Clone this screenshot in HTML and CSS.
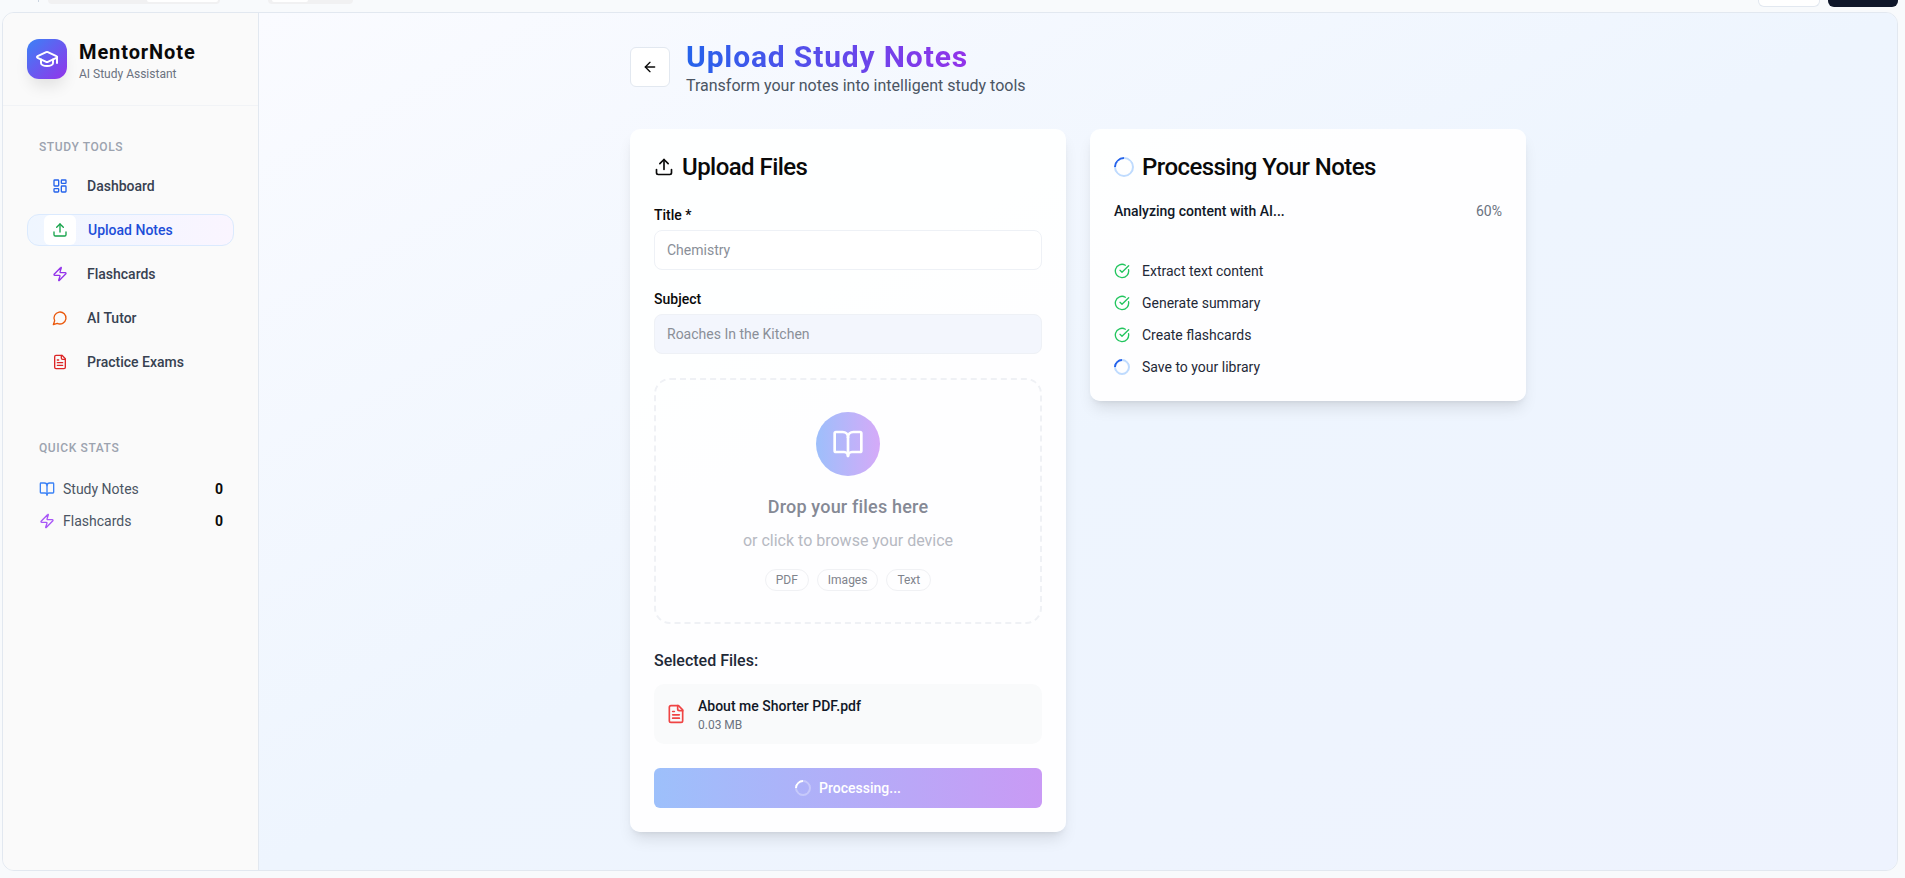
FILE: index.html
```html
<!DOCTYPE html>
<html lang="en">
<head>
  <meta charset="UTF-8" />
  <meta name="viewport" content="width=device-width, initial-scale=1.0"/>
  <title>Upload Study Notes - MentorNote</title>
  <link rel="stylesheet" href="styles.css">
</head>
<body>
  <svg class="sprite" aria-hidden="true">
    <symbol id="i-cap" viewBox="0 0 24 24"><path d="M21.42 10.922a1 1 0 0 0-.019-1.838L12.83 5.18a2 2 0 0 0-1.66 0L2.6 9.08a1 1 0 0 0 0 1.832l8.57 3.908a2 2 0 0 0 1.66 0z"/><path d="M22 10v6"/><path d="M6 12.5V16a6 3 0 0 0 12 0v-3.5"/></symbol>
    <symbol id="i-dash" viewBox="0 0 24 24"><rect width="7" height="9" x="3" y="3" rx="1"/><rect width="7" height="5" x="14" y="3" rx="1"/><rect width="7" height="9" x="14" y="12" rx="1"/><rect width="7" height="5" x="3" y="16" rx="1"/></symbol>
    <symbol id="i-upload" viewBox="0 0 24 24"><path d="M21 15v4a2 2 0 0 1-2 2H5a2 2 0 0 1-2-2v-4"/><polyline points="17 8 12 3 7 8"/><line x1="12" x2="12" y1="3" y2="15"/></symbol>
    <symbol id="i-zap" viewBox="0 0 24 24"><path d="M4 14a1 1 0 0 1-.78-1.63l9.9-10.2a.5.5 0 0 1 .86.46l-1.92 6.02A1 1 0 0 0 13 10h7a1 1 0 0 1 .78 1.63l-9.9 10.2a.5.5 0 0 1-.86-.46l1.92-6.02A1 1 0 0 0 11 14z"/></symbol>
    <symbol id="i-chat" viewBox="0 0 24 24"><path d="M7.9 20A9 9 0 1 0 4 16.1L2 22Z"/></symbol>
    <symbol id="i-file" viewBox="0 0 24 24"><path d="M15 2H6a2 2 0 0 0-2 2v16a2 2 0 0 0 2 2h12a2 2 0 0 0 2-2V7Z"/><path d="M14 2v4a2 2 0 0 0 2 2h4"/><path d="M10 9H8"/><path d="M16 13H8"/><path d="M16 17H8"/></symbol>
    <symbol id="i-book" viewBox="0 0 24 24"><path d="M12 7v14"/><path d="M3 18a1 1 0 0 1-1-1V4a1 1 0 0 1 1-1h5a4 4 0 0 1 4 4 4 4 0 0 1 4-4h5a1 1 0 0 1 1 1v13a1 1 0 0 1-1 1h-6a3 3 0 0 0-3 3 3 3 0 0 0-3-3z"/></symbol>
    <symbol id="i-back" viewBox="0 0 24 24"><path d="m12 19-7-7 7-7"/><path d="M19 12H5"/></symbol>
    <symbol id="i-check" viewBox="0 0 24 24"><path d="M21.801 10A10 10 0 1 1 17 3.335"/><path d="m9 11 3 3L22 4"/></symbol>
  </svg>

  <!-- bottom edge of the page header, scrolled almost out of view -->
  <div class="topbar">
    <span class="topbar-rule"></span>
    <div class="tabs tabs-first"><span class="tab-on"></span></div>
    <div class="tabs tabs-second"><span class="tab-on"></span></div>
    <span class="topbar-btn"></span>
    <span class="topbar-btn dark"></span>
  </div>

  <div class="frame">
    <aside class="sidebar">
      <div class="brand">
        <div class="brand-logo"><svg class="icon icon-24"><use href="#i-cap"/></svg></div>
        <div>
          <p class="brand-name">MentorNote</p>
          <p class="brand-sub">AI Study Assistant</p>
        </div>
      </div>

      <nav class="nav">
        <p class="nav-title">Study Tools</p>
        <a class="nav-item"><span class="nav-icon c-blue"><svg class="icon"><use href="#i-dash"/></svg></span>Dashboard</a>
        <a class="nav-item active"><span class="nav-icon c-green"><svg class="icon"><use href="#i-upload"/></svg></span>Upload Notes</a>
        <a class="nav-item"><span class="nav-icon c-purple"><svg class="icon"><use href="#i-zap"/></svg></span>Flashcards</a>
        <a class="nav-item"><span class="nav-icon c-orange"><svg class="icon"><use href="#i-chat"/></svg></span>AI Tutor</a>
        <a class="nav-item"><span class="nav-icon c-red"><svg class="icon"><use href="#i-file"/></svg></span>Practice Exams</a>
      </nav>

      <div class="stats">
        <p class="nav-title">Quick Stats</p>
        <div class="stat-row">
          <svg class="icon c-blue-light"><use href="#i-book"/></svg>
          <span class="stat-label">Study Notes</span>
          <b class="stat-value">0</b>
        </div>
        <div class="stat-row">
          <svg class="icon c-purple-light"><use href="#i-zap"/></svg>
          <span class="stat-label">Flashcards</span>
          <b class="stat-value">0</b>
        </div>
      </div>
    </aside>

    <main class="main">
      <div class="container">
        <header class="page-head">
          <button class="back-btn"><svg class="icon"><use href="#i-back"/></svg></button>
          <div>
            <h1>Upload Study Notes</h1>
            <p class="page-sub">Transform your notes into intelligent study tools</p>
          </div>
        </header>

        <div class="columns">
          <section class="card">
            <h2><svg class="icon icon-20"><use href="#i-upload"/></svg>Upload Files</h2>

            <label class="field-label" for="title">Title *</label>
            <input class="field" id="title" type="text" placeholder="Chemistry" />

            <label class="field-label second" for="subject">Subject</label>
            <input class="field filled" id="subject" type="text" placeholder="Roaches In the Kitchen" />

            <div class="dropzone">
              <div class="drop-circle"><svg class="icon icon-32"><use href="#i-book"/></svg></div>
              <p class="drop-title">Drop your files here</p>
              <p class="drop-sub">or click to browse your device</p>
              <div class="chips">
                <span class="chip">PDF</span>
                <span class="chip">Images</span>
                <span class="chip">Text</span>
              </div>
            </div>

            <p class="selected-title">Selected Files:</p>
            <div class="file-row">
              <svg class="icon icon-20 c-file"><use href="#i-file"/></svg>
              <div>
                <p class="file-name">About me Shorter PDF.pdf</p>
                <p class="file-size">0.03 MB</p>
              </div>
            </div>

            <button class="submit-btn"><span class="spinner white"></span>Processing...</button>
          </section>

          <section class="card card-short">
            <h2><span class="spinner big"></span>Processing Your Notes</h2>
            <div class="progress-head">
              <span class="progress-label">Analyzing content with AI...</span>
              <span class="progress-value">60%</span>
            </div>
            <ul class="steps">
              <li><svg class="icon c-check"><use href="#i-check"/></svg>Extract text content</li>
              <li><svg class="icon c-check"><use href="#i-check"/></svg>Generate summary</li>
              <li><svg class="icon c-check"><use href="#i-check"/></svg>Create flashcards</li>
              <li><span class="spinner"></span>Save to your library</li>
            </ul>
          </section>
        </div>
      </div>
    </main>
  </div>
</body>
</html>
```

FILE: styles.css
```css
* {
  box-sizing: border-box;
  margin: 0;
  padding: 0;
}

body {
  background: #f8fafc;
  height: 878px;
  overflow: hidden;
  font-family: Roboto, "Noto Sans", sans-serif;
  color: #0f172a;
}

.sprite {
  display: none;
}

.icon {
  width: 16px;
  height: 16px;
  flex-shrink: 0;
  fill: none;
  stroke: currentColor;
  stroke-width: 2;
  stroke-linecap: round;
  stroke-linejoin: round;
}

.icon-20 { width: 20px; height: 20px; }
.icon-24 { width: 24px; height: 24px; }
.icon-32 { width: 32px; height: 32px; }

.c-blue { color: #2563eb; }
.c-green { color: #16a34a; }
.c-purple { color: #9333ea; }
.c-orange { color: #ea580c; }
.c-red { color: #dc2626; }
.c-blue-light { color: #3b82f6; }
.c-purple-light { color: #a855f7; }
.c-file { color: #ef4444; }
.c-check { color: #22c55e; }

/* top strip */
.topbar {
  height: 12px;
  overflow: hidden;
  display: flex;
  align-items: flex-start;
  padding: 0 7px 0 38px;
}

.topbar-rule {
  width: 1px;
  height: 2px;
  background: #cbd5e1;
}

.tabs {
  height: 4px;
  background: #f1f1f2;
  border-radius: 0 0 10px 10px;
  display: flex;
}

.tab-on {
  height: 2px;
  background: #fff;
  border-radius: 0 0 6px 6px;
}

.tabs-first {
  width: 172px;
  margin-left: 9px;
  justify-content: flex-end;
  padding-right: 2px;
}

.tabs-first .tab-on {
  width: 71px;
}

.tabs-second {
  width: 85px;
  margin-left: 48px;
  padding-left: 4px;
}

.tabs-second .tab-on {
  width: 36px;
}

.topbar-btn {
  width: 62px;
  height: 7px;
  margin-left: auto;
  background: #fff;
  border: 1px solid #e2e8f0;
  border-top: none;
  border-radius: 0 0 6px 6px;
}

.topbar-btn.dark {
  width: 70px;
  margin-left: 8px;
  background: #0f172a;
  border: none;
}

/* app frame */
.frame {
  margin: 0 7px 8px 2px;
  height: 859px;
  display: flex;
  border: 1px solid #e2e8f0;
  border-radius: 12px;
  overflow: hidden;
}

.sidebar {
  width: 256px;
  flex-shrink: 0;
  background: #fafafa;
  border-right: 1px solid #e2e8f0;
}

.brand {
  height: 93px;
  padding: 26px 24px 0;
  display: flex;
  gap: 12px;
  border-bottom: 1px solid #f1f3f6;
}

.brand-logo {
  width: 40px;
  height: 40px;
  border-radius: 12px;
  background: linear-gradient(135deg, #3b82f6, #9333ea);
  color: #fff;
  display: flex;
  align-items: center;
  justify-content: center;
  box-shadow: 0 10px 15px -3px rgba(0, 0, 0, 0.1);
}

.brand-name {
  font-size: 20px;
  font-weight: 700;
  line-height: 24px;
  letter-spacing: 0.9px;
  margin-top: 1px;
  color: #0a0a0a;
}

.brand-sub {
  font-size: 12px;
  line-height: 16px;
  margin-top: 2px;
  color: #6b7280;
}

.nav {
  padding: 33px 24px 0;
}

.nav-title {
  font-size: 12px;
  line-height: 16px;
  font-weight: 500;
  letter-spacing: 0.6px;
  text-transform: uppercase;
  color: #9ca3af;
  padding-left: 12px;
  margin-bottom: 15px;
}

.nav-item {
  height: 32px;
  margin-bottom: 12px;
  display: flex;
  align-items: center;
  font-size: 14px;
  font-weight: 500;
  color: #374151;
}

.nav-icon {
  width: 32px;
  height: 30px;
  margin-left: 17px;
  margin-right: 11px;
  border-radius: 6px;
  display: flex;
  align-items: center;
  justify-content: center;
}

.nav-item.active {
  background: linear-gradient(90deg, #eff6ff, #faf5ff);
  border: 1px solid #dbeafe;
  border-radius: 12px;
  color: #1d4ed8;
}

.nav-item.active .nav-icon {
  background: #fff;
  margin-left: 16px;
  margin-right: 12px;
}

.stats {
  margin-top: 62px;
  padding: 0 24px;
}

.stats .nav-title {
  margin-bottom: 17px;
}

.stat-row {
  height: 32px;
  padding: 0 12px;
  display: flex;
  align-items: center;
  gap: 8px;
  font-size: 14px;
}

.stat-label {
  flex: 1;
  color: #4b5563;
}

.stat-value {
  color: #0a0a0a;
  font-size: 14px;
  margin-right: -1px;
}

/* main column */
.main {
  flex: 1;
  background: linear-gradient(to bottom right, #fafbff, #eef5fe 50%, #eef3fe);
  padding-top: 34px;
}

.container {
  width: 896px;
  margin: 0 auto;
}

.page-head {
  display: flex;
  align-items: center;
  gap: 16px;
  height: 40px;
  margin-bottom: 42px;
}

.back-btn {
  width: 40px;
  height: 40px;
  background: #fff;
  border: 1px solid #e2e8f0;
  border-radius: 6px;
  color: #0a0a0a;
  display: flex;
  align-items: center;
  justify-content: center;
}

h1 {
  font-size: 30px;
  font-weight: 700;
  line-height: 36px;
  letter-spacing: 0.85px;
  margin-top: 2px;
  width: fit-content;
  background: linear-gradient(90deg, #2563eb, #9333ea);
  -webkit-background-clip: text;
  background-clip: text;
  -webkit-text-fill-color: transparent;
}

.page-sub {
  font-size: 16px;
  line-height: 22px;
  color: #4b5563;
}

.columns {
  display: grid;
  grid-template-columns: 1fr 1fr;
  gap: 24px;
  align-items: start;
}

.card {
  background: rgba(255, 255, 255, 0.9);
  border-radius: 10px;
  padding: 24px;
  box-shadow: 0 10px 15px -3px rgba(0, 0, 0, 0.1), 0 4px 6px -4px rgba(0, 0, 0, 0.1);
}

h2 {
  display: flex;
  align-items: center;
  gap: 8px;
  font-size: 24px;
  font-weight: 500;
  line-height: 28px;
  letter-spacing: -0.55px;
  color: #0a0a0a;
  margin-bottom: 24px;
}

.card-short h2 {
  margin-bottom: 20px;
}

.field-label {
  display: block;
  font-size: 14px;
  font-weight: 500;
  line-height: 20px;
  margin-bottom: 5px;
  color: #0a0a0a;
}

.field-label.second {
  margin-top: 19px;
}

.field {
  display: block;
  width: 100%;
  height: 40px;
  padding: 0 12px;
  background: #fff;
  border: 1px solid #eef1f6;
  border-radius: 8px;
  font-family: inherit;
  font-size: 14px;
  outline: none;
}

.field::placeholder {
  color: #8a8f98;
}

.field.filled {
  background: #f3f6fd;
}

.dropzone {
  margin-top: 24px;
  height: 246px;
  border: 2px dashed #eff1f5;
  border-radius: 16px;
  padding-top: 32px;
  text-align: center;
}

.drop-circle {
  width: 64px;
  height: 64px;
  margin: 0 auto 17px;
  border-radius: 50%;
  background: linear-gradient(90deg, #9dbffb, #d5aaf8);
  color: #fff;
  display: flex;
  align-items: center;
  justify-content: center;
}

.drop-title {
  font-size: 18px;
  font-weight: 500;
  line-height: 28px;
  letter-spacing: 0.18px;
  color: #858995;
}

.drop-sub {
  font-size: 16px;
  line-height: 24px;
  margin-top: 8px;
  color: #b6b9c2;
}

.chips {
  display: flex;
  justify-content: center;
  gap: 8px;
  margin-top: 16px;
}

.chip {
  height: 22px;
  padding: 0 10px;
  border: 1px solid #f0f1f4;
  border-radius: 11px;
  font-size: 12px;
  line-height: 20px;
  color: #7f838c;
}

.selected-title {
  margin-top: 25px;
  font-size: 16px;
  font-weight: 500;
  line-height: 24px;
  color: #1f2937;
}

.file-row {
  margin-top: 11px;
  height: 60px;
  padding: 0 12px;
  display: flex;
  align-items: center;
  gap: 12px;
  background: #f9fafb;
  border-radius: 10px;
}

.file-name {
  font-size: 14px;
  font-weight: 500;
  line-height: 20px;
  color: #111827;
}

.file-size {
  font-size: 12px;
  line-height: 16px;
  margin-top: 1px;
  color: #6b7280;
}

.submit-btn {
  width: 100%;
  height: 40px;
  margin-top: 24px;
  border: none;
  border-radius: 6px;
  background: linear-gradient(90deg, #9dc0fb, #c99af5);
  color: #fff;
  font-family: inherit;
  font-size: 14px;
  font-weight: 500;
  display: flex;
  align-items: center;
  justify-content: center;
  gap: 8px;
}

.spinner {
  width: 16px;
  height: 16px;
  flex-shrink: 0;
  border: 2px solid #bfdbfe;
  border-top-color: #2563eb;
  border-radius: 50%;
  transform: rotate(-45deg);
}

.spinner.big {
  width: 20px;
  height: 20px;
}

.spinner.white {
  border-color: rgba(255, 255, 255, 0.3);
  border-top-color: #fff;
}

.progress-head {
  display: flex;
  justify-content: space-between;
  align-items: center;
  font-size: 14px;
  line-height: 20px;
}

.progress-label {
  font-weight: 500;
  color: #111827;
}

.progress-value {
  color: #6b7280;
}

.steps {
  list-style: none;
  margin-top: 40px;
  display: flex;
  flex-direction: column;
  gap: 12px;
}

.steps li {
  display: flex;
  align-items: center;
  gap: 12px;
  font-size: 14px;
  line-height: 20px;
  color: #1f2937;
}
```
